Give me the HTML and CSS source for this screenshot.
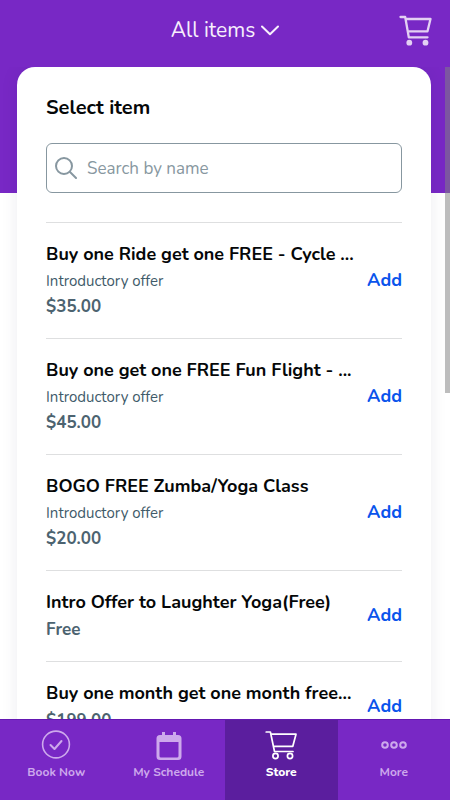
FILE: index.html
```html
<!DOCTYPE html>
<html lang="en">
<head>
<meta charset="utf-8">
<meta name="viewport" content="width=device-width, initial-scale=1">
<title>Store</title>
<link rel="stylesheet" href="styles.css">
</head>
<body>
<div class="app">
  <header class="topbar">
    <button class="filter" type="button">All items
      <svg width="18" height="11" viewBox="0 0 18 11" fill="none" stroke="currentColor" stroke-width="2" stroke-linecap="round" stroke-linejoin="round"><path d="M1 1.500l8 7.800 8-7.800"/></svg>
    </button>
    <button class="cart" type="button" aria-label="Cart">
      <svg width="33" height="31" viewBox="0 0 33 31" fill="none" stroke="currentColor" stroke-width="2.300" stroke-linecap="round" stroke-linejoin="round"><path d="M1.500 2H6.200L9.800 22.300H28.500M7 4H31.500L28.500 16.300H9"/><circle cx="10.300" cy="27.700" r="2.900" fill="currentColor" stroke="none"/><circle cx="26.500" cy="27.700" r="2.900" fill="currentColor" stroke="none"/></svg>
    </button>
  </header>
  <main class="content">
    <section class="card">
      <h1 class="heading">Select item</h1>
      <label class="search">
        <svg width="22" height="22" viewBox="0 0 22 22" fill="none" stroke="currentColor" stroke-width="2" stroke-linecap="round"><circle cx="9" cy="9" r="8"/><path d="M15 15l6 6"/></svg>
        <input class="search-input" type="text" placeholder="Search by name" aria-label="Search by name">
      </label>
      <ul class="items">
        <li class="item">
          <div class="info"><h2 class="name">Buy one Ride get one FREE - Cycle ...</h2><p class="kind">Introductory offer</p><p class="price">$35.00</p></div>
          <button class="add" type="button">Add</button>
        </li>
        <li class="item">
          <div class="info"><h2 class="name">Buy one get one FREE Fun Flight - ...</h2><p class="kind">Introductory offer</p><p class="price">$45.00</p></div>
          <button class="add" type="button">Add</button>
        </li>
        <li class="item">
          <div class="info"><h2 class="name">BOGO FREE Zumba/Yoga Class</h2><p class="kind">Introductory offer</p><p class="price">$20.00</p></div>
          <button class="add" type="button">Add</button>
        </li>
        <li class="item">
          <div class="info"><h2 class="name">Intro Offer to Laughter Yoga(Free)</h2><p class="price">Free</p></div>
          <button class="add" type="button">Add</button>
        </li>
        <li class="item">
          <div class="info"><h2 class="name">Buy one month get one month free...</h2><p class="price">$199.00</p></div>
          <button class="add" type="button">Add</button>
        </li>
      </ul>
    </section>
    <div class="scroll-thumb"></div>
  </main>
  <nav class="tabs">
    <a class="tab" href="#book">
      <svg width="30" height="30" viewBox="0 0 30 30" fill="none" stroke="currentColor" stroke-width="1.6" stroke-linecap="round" stroke-linejoin="round"><circle cx="15" cy="14.500" r="13.400"/><path d="M9.500 15l4 4 7-8" stroke-width="2"/></svg>
      <span>Book Now</span>
    </a>
    <a class="tab" href="#schedule">
      <svg width="26" height="30" viewBox="0 0 26 30"><path fill="currentColor" fill-rule="evenodd" d="M6 2h3v3h8V2h3v3h2a3.500 3.500 0 0 1 3.500 3.500v18A3.500 3.500 0 0 1 22 30H4A3.500 3.500 0 0 1 .5 26.500v-18A3.500 3.500 0 0 1 4 5h2zM3.500 12v14A1.500 1.500 0 0 0 5 27.500h16a1.500 1.500 0 0 0 1.500-1.500V12z"/></svg>
      <span>My Schedule</span>
    </a>
    <a class="tab tab-active" href="#store" aria-current="page">
      <svg width="32" height="30" viewBox="0 0 32 30" fill="none" stroke="currentColor" stroke-width="1.7" stroke-linecap="round" stroke-linejoin="round"><path d="M1.200 2H5.400L9.500 21.500H28M6 4.200H31L27.800 16.300H8.500"/><circle cx="10.500" cy="26" r="2.600"/><circle cx="25" cy="26" r="2.600"/></svg>
      <span>Store</span>
    </a>
    <a class="tab" href="#more">
      <svg width="26" height="30" viewBox="0 0 26 30" fill="none" stroke="currentColor" stroke-width="2"><circle cx="4" cy="15" r="2.800"/><circle cx="13" cy="15" r="2.800"/><circle cx="22" cy="15" r="2.800"/></svg>
      <span>More</span>
    </a>
  </nav>
</div>
</body>
</html>
```
FILE: styles.css
```css
* { box-sizing: border-box; margin: 0; }

body {
  font-family: Nunito, "Noto Sans", sans-serif;
  color: #050708;
}

button {
  padding: 0;
  border: 0;
  background: none;
  font: inherit;
}

svg { display: block; flex: none; }

.app {
  display: flex;
  flex-direction: column;
  height: 100vh;
  background: linear-gradient(#7828c5, #7828c5) top / 100% 193px no-repeat #fff;
}

.topbar {
  display: grid;
  grid-template-columns: 1fr auto 1fr;
  align-items: center;
  padding: 12px 18px 19px;
  color: #fff;
}

.filter {
  grid-column: 2;
  display: flex;
  align-items: center;
  gap: 6px;
  color: #f7effc;
  font-size: 21px;
  line-height: 36px;
}

.cart {
  justify-self: end;
  color: #e3d0f3;
}

.content {
  position: relative;
  flex: 1;
  min-height: 0;
  overflow: hidden;
}

.card {
  margin: 0 19px 0 17px;
  padding: 27px 29px;
  border-radius: 18px 18px 0 0;
  background: #fff;
  box-shadow: 0 0 18px rgba(30, 20, 80, 0.08);
}

.heading {
  margin-bottom: 21px;
  font-size: 20px;
  font-weight: 700;
  line-height: 28px;
}

.search {
  display: flex;
  align-items: center;
  gap: 10px;
  height: 50px;
  margin-bottom: 29px;
  padding: 0 8px;
  border: 1px solid #8797a0;
  border-radius: 6px;
  color: #8797a0;
}

.search-input {
  flex: 1;
  min-width: 0;
  padding: 0;
  border: 0;
  outline: 0;
  background: none;
  font: inherit;
  font-size: 17px;
}

.search-input::placeholder { color: #8797a0; opacity: 1; }

.items { padding: 0; list-style: none; }

.item {
  display: flex;
  align-items: center;
  justify-content: space-between;
  padding: 17px 0 19px;
  border-top: 1px solid #dedfe0;
}

.info { min-width: 0; white-space: nowrap; }

.name {
  font-size: 18px;
  font-weight: 700;
  line-height: 29px;
}

.kind {
  color: #3f5b6a;
  font-size: 15px;
  line-height: 25px;
}

.price {
  color: #4c6370;
  font-size: 17px;
  font-weight: 700;
  line-height: 25px;
}

.add {
  color: #0a54ec;
  font-size: 18px;
  font-weight: 700;
  line-height: 26px;
}

.scroll-thumb {
  position: absolute;
  top: 0;
  right: 0;
  width: 5px;
  height: 326px;
  background: rgba(128, 128, 128, 0.52);
}

.tabs {
  display: grid;
  grid-template-columns: repeat(4, 1fr);
  background: #7828c5;
  border-top: 1px solid #6417b2;
}

.tab {
  display: flex;
  flex-direction: column;
  align-items: center;
  gap: 3px;
  padding: 10px 0 19px;
  color: #cda9ec;
  font-size: 12px;
  font-weight: 700;
  line-height: 18px;
  text-decoration: none;
}

.tab-active {
  background: #5b1e9e;
  color: #fff;
  font-weight: 800;
}
```
